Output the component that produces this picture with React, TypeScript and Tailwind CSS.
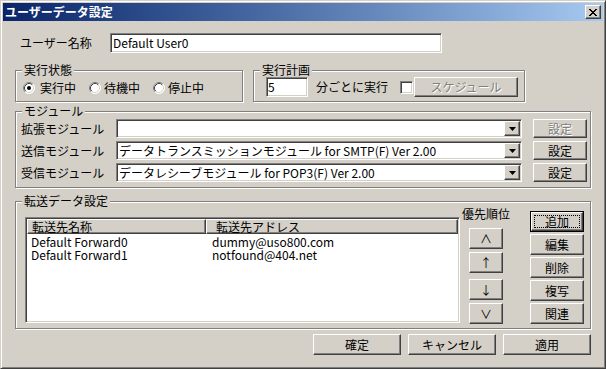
import React from "react"

const raised =
  "border border-t-white border-l-white border-r-[#404040] border-b-[#404040] shadow-[inset_-1px_-1px_0_#808080] bg-[#d4d0c8]"
const sunken =
  "border border-t-[#808080] border-l-[#808080] border-r-white border-b-white shadow-[inset_1px_1px_0_#404040,inset_-1px_-1px_0_#d4d0c8] p-[1px]"
const disabledText = "text-[#808080] [text-shadow:1px_1px_0_#fff]"

const xPattern = ["xx....xx", ".xx..xx.", "..xxxx..", "...xx...", "..xxxx..", ".xx..xx.", "xx....xx"]

function CloseGlyph() {
  return (
    <svg width="8" height="7" shapeRendering="crispEdges">
      {xPattern.map((row, y) =>
        row.split("").map((c, x) => (c === "x" ? <rect key={`${x}-${y}`} x={x} y={y} width="1" height="1" fill="#000" /> : null))
      )}
    </svg>
  )
}

function Radio({ checked }: { checked?: boolean }) {
  return (
    <svg width="12" height="12" className="shrink-0">
      <circle cx="6" cy="6" r="5.5" fill="#fff" />
      <path d="M2.11 9.89 A5.5 5.5 0 0 1 9.89 2.11" stroke="#808080" fill="none" />
      <path d="M2.11 9.89 A5.5 5.5 0 0 0 9.89 2.11" stroke="#fff" fill="none" />
      <path d="M2.82 9.18 A4.5 4.5 0 0 1 9.18 2.82" stroke="#404040" fill="none" />
      <path d="M2.82 9.18 A4.5 4.5 0 0 0 9.18 2.82" stroke="#d4d0c8" fill="none" />
      {checked && <circle cx="6" cy="6" r="2" fill="#000" />}
    </svg>
  )
}

function Group({ title, className, children }: { title: string; className?: string; children?: React.ReactNode }) {
  return (
    <div className={`relative border border-[#808080] shadow-[inset_1px_1px_0_#fff,1px_1px_0_#fff] ${className ?? ""}`}>
      <span className="absolute -top-[8px] left-[6px] px-[2px] bg-[#d4d0c8] leading-[14px]">{title}</span>
      {children}
    </div>
  )
}

function Btn({ children, className, disabled }: { children: React.ReactNode; className?: string; disabled?: boolean }) {
  return (
    <button type="button" className={`${raised} flex items-center justify-center leading-[14px] ${disabled ? disabledText : ""} ${className ?? ""}`}>
      {children}
    </button>
  )
}

function Combo({ value }: { value: string }) {
  return (
    <div className={`${sunken} w-[406px] h-[19px] bg-white flex items-center`}>
      <span className="flex-1 pl-[1px] whitespace-nowrap leading-[15px]">{value}</span>
      <div className={`${raised} w-[16px] h-full flex items-center justify-center`}>
        <svg width="7" height="4">
          <path d="M0 0h7L3.5 4z" fill="#000" />
        </svg>
      </div>
    </div>
  )
}

const modules = [
  { label: "拡張モジュール", value: "", disabled: true },
  { label: "送信モジュール", value: "データトランスミッションモジュール for SMTP(F) Ver 2.00" },
  { label: "受信モジュール", value: "データレシーブモジュール for POP3(F) Ver 2.00" },
]

const forwards = [
  { name: "Default Forward0", address: "dummy@uso800.com" },
  { name: "Default Forward1", address: "notfound@404.net" },
]

export default function App() {
  return (
    <div className="w-[606px] h-[369px] bg-[#d4d0c8] border border-t-[#d4d0c8] border-l-[#d4d0c8] border-r-[#404040] border-b-[#404040] shadow-[inset_1px_1px_0_#fff,inset_-1px_-1px_0_#808080] p-[2px] flex flex-col text-[12px] leading-[14px] text-black font-['Noto_Sans_CJK_JP','Noto_Sans',sans-serif]">
      {/* title bar */}
      <div className="h-[18px] flex items-center bg-gradient-to-r from-[#0a246a] to-[#a6caf0] pl-[2px] pr-[2px]">
        <span className="flex-1 font-bold text-white">ユーザーデータ設定</span>
        <div className={`${raised} w-[16px] h-[14px] flex items-center justify-center`}>
          <CloseGlyph />
        </div>
      </div>

      <div className="flex flex-col px-[12px]">
        {/* user name */}
        <div className="mt-[12px] flex items-center h-[20px]">
          <span className="w-[95px] pl-[5px]">ユーザー名称</span>
          <div className={`${sunken} w-[332px] h-[20px] bg-white flex items-center pl-[2px]`}>Default User0</div>
        </div>

        {/* status + schedule */}
        <div className="mt-[17px] flex">
          <Group title="実行状態" className="w-[228px] h-[32px]">
            <div className="flex items-center h-full pt-[4px] pl-[7px] gap-[13px]">
              <div className="flex items-center gap-[5px]">
                <Radio checked />
                <span>実行中</span>
              </div>
              <div className="flex items-center gap-[3px]">
                <Radio />
                <span>待機中</span>
              </div>
              <div className="flex items-center gap-[3px]">
                <Radio />
                <span>停止中</span>
              </div>
            </div>
          </Group>
          <Group title="実行計画" className="ml-[10px] w-[272px] h-[32px]">
            <div className="flex items-center mt-[6px] h-[20px] pl-[12px]">
              <div className={`${sunken} w-[42px] h-[20px] bg-white flex items-center pl-[1px]`}>5</div>
              <span className="ml-[8px]">分ごとに実行</span>
              <div className={`${sunken} ml-[12px] w-[13px] h-[13px] bg-white`} />
              <Btn disabled className="ml-[1px] w-[104px] h-[20px]">
                スケジュール
              </Btn>
            </div>
          </Group>
        </div>

        {/* modules */}
        <Group title="モジュール" className="mt-[9px] w-full h-[77px]">
          <div className="flex flex-col gap-[3px] pt-[7px]">
            {modules.map((m) => (
              <div key={m.label} className="flex items-center">
                <span className="w-[100px] pl-[5px]">{m.label}</span>
                <Combo value={m.value} />
                <Btn disabled={m.disabled} className="ml-[11px] w-[54px] h-[19px]">
                  設定
                </Btn>
              </div>
            ))}
          </div>
        </Group>

        {/* forwarding */}
        <Group title="転送データ設定" className="mt-[13px] w-full h-[128px]">
          <div className="flex items-start pl-[9px]">
            <div className={`${sunken} mt-[15px] w-[435px] h-[106px] bg-white`}>
              <div className="flex h-[15px]">
                <div className={`${raised} w-[179px] pl-[4px] flex items-center`}>転送先名称</div>
                <div className={`${raised} flex-1 pl-[9px] flex items-center`}>転送先アドレス</div>
              </div>
              <div className="pt-[1px]">
                {forwards.map((f) => (
                  <div key={f.name} className="flex h-[13px] items-center leading-[13px]">
                    <span className="w-[179px] pl-[4px]">{f.name}</span>
                    <span className="pl-[6px]">{f.address}</span>
                  </div>
                ))}
              </div>
            </div>

            <div className="ml-[2px] w-[48px] flex flex-col items-center">
              <span className="mt-[5px]">優先順位</span>
              <Btn className="mt-[7px] w-[34px] h-[21px]">∧</Btn>
              <Btn className="mt-[3px] w-[34px] h-[21px]">↑</Btn>
              <Btn className="mt-[6px] w-[34px] h-[21px]">↓</Btn>
              <Btn className="mt-[3px] w-[34px] h-[21px]">∨</Btn>
            </div>

            <div className="ml-[20px] mt-[9px] w-[54px] flex flex-col gap-[2px]">
              <div className="border border-black h-[21px]">
                <div className={`${raised} h-full p-[2px]`}>
                  <div className="h-full border border-dotted border-black flex items-center justify-center">追加</div>
                </div>
              </div>
              <Btn className="h-[21px]">編集</Btn>
              <Btn className="h-[21px]">削除</Btn>
              <Btn className="h-[21px]">複写</Btn>
              <Btn className="h-[21px]">関連</Btn>
            </div>
          </div>
        </Group>

        {/* bottom buttons */}
        <div className="mt-[5px] flex justify-end gap-[7px]">
          <Btn className="w-[88px] h-[21px]">確定</Btn>
          <Btn className="w-[88px] h-[21px]">キャンセル</Btn>
          <Btn className="w-[88px] h-[21px]">適用</Btn>
        </div>
      </div>
    </div>
  )
}
